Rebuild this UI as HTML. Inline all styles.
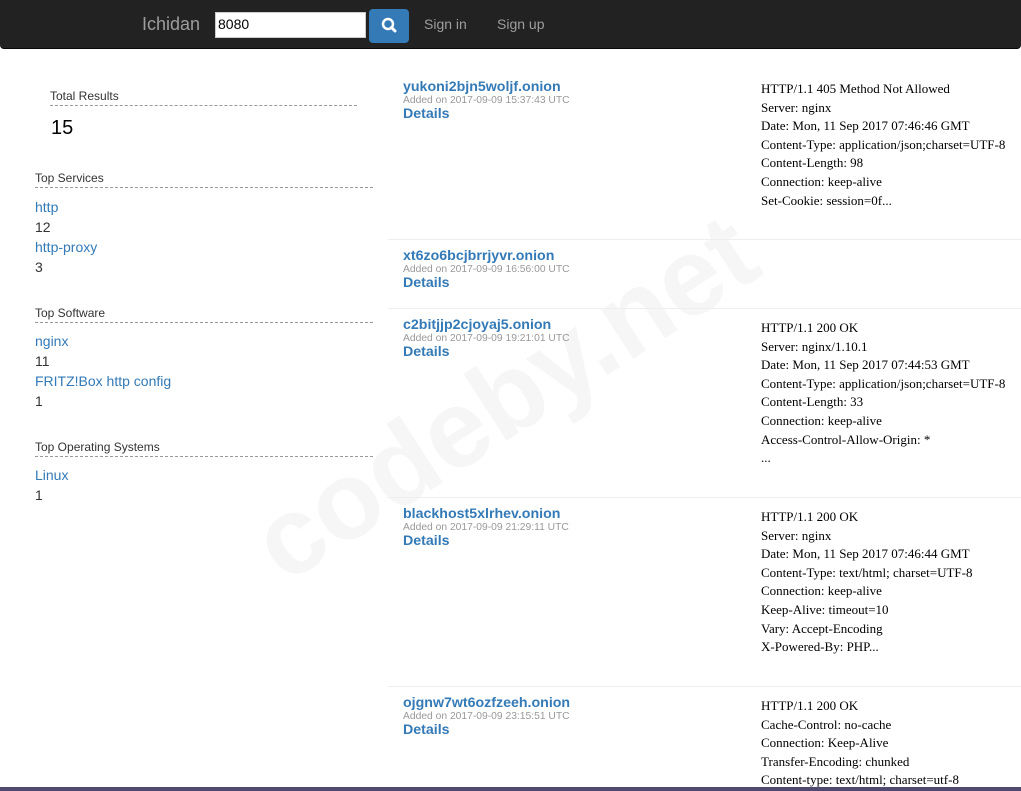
<!DOCTYPE html>
<html><head><meta charset="utf-8"><style>
*{margin:0;padding:0;box-sizing:border-box}
body{width:1021px;height:791px;overflow:hidden;background:#fff;font-family:"Liberation Sans",sans-serif;position:relative}
.nav{position:absolute;left:0;top:0;width:1021px;height:49px;background:#222;border-bottom:1px solid #080808;border-radius:0 0 4px 4px}
.brand{position:absolute;left:142px;top:14px;font-size:18px;color:#9d9d9d}
.inp{position:absolute;left:215px;top:12px;width:151px;height:26px;background:#fff;border:1px solid #ccc;font-size:14px;padding:3px 2px;color:#000}
.btn{position:absolute;left:369px;top:9px;width:40px;height:34px;background:#337ab7;border-radius:4px}
.nl{position:absolute;top:16px;font-size:14px;color:#9d9d9d}
.lbl{position:absolute;font-size:12px;color:#333;border-bottom:1px dashed #999;padding-bottom:2px}
.a{color:#337ab7}
.t{position:absolute;font-size:14px;color:#333;line-height:20px}
.host{position:absolute;left:403px;font-weight:bold;font-size:14.2px;color:#337ab7;line-height:16px}
.host small{display:block;font-weight:normal;font-size:10.3px;color:#999;line-height:11px}
.hdr{position:absolute;left:761px;font-family:"Liberation Serif",serif;font-size:13px;line-height:18.6px;color:#000;white-space:nowrap}
.sep{position:absolute;left:388px;width:633px;height:1px;background:#eee}
.wm{position:absolute;left:230px;top:500px;font-size:110px;font-weight:bold;color:#f6f6f6;transform:rotate(-33deg);transform-origin:left top;white-space:nowrap}
.tb{position:absolute;left:0;top:787px;width:1021px;height:4px;background:#504a70}
</style></head><body>
<div class="wm">codeby.net</div>
<div class="nav">
<div class="brand">Ichidan</div>
<div class="inp">8080</div>
<div class="btn"><svg width="40" height="34" viewBox="0 0 40 34"><circle cx="19" cy="15" r="5" fill="none" stroke="#fff" stroke-width="2.5"/><line x1="22.5" y1="18.5" x2="26" y2="22" stroke="#fff" stroke-width="3" stroke-linecap="round"/></svg></div>
<div class="nl" style="left:424px">Sign in</div>
<div class="nl" style="left:497px">Sign up</div>
</div>

<div class="lbl" style="left:50px;top:89px;width:307px">Total Results</div>
<div class="t" style="left:51px;top:116px;font-size:20px;color:#000;line-height:24px">15</div>
<div class="lbl" style="left:35px;top:171px;width:338px">Top Services</div>
<div class="t" style="left:35px;top:197px"><span class="a">http</span><br>12<br><span class="a">http-proxy</span><br>3</div>
<div class="lbl" style="left:35px;top:306px;width:338px">Top Software</div>
<div class="t" style="left:35px;top:331px"><span class="a">nginx</span><br>11<br><span class="a">FRITZ!Box http config</span><br>1</div>
<div class="lbl" style="left:35px;top:440px;width:338px">Top Operating Systems</div>
<div class="t" style="left:35px;top:465px"><span class="a">Linux</span><br>1</div>

<div class="host" style="top:79px">yukoni2bjn5woljf.onion<small>Added on 2017-09-09 15:37:43 UTC</small>Details</div>
<div class="hdr" style="top:80px">HTTP/1.1 405 Method Not Allowed<br>Server: nginx<br>Date: Mon, 11 Sep 2017 07:46:46 GMT<br>Content-Type: application/json;charset=UTF-8<br>Content-Length: 98<br>Connection: keep-alive<br>Set-Cookie: session=0f...</div>
<div class="sep" style="top:239px"></div>
<div class="host" style="top:248px">xt6zo6bcjbrrjyvr.onion<small>Added on 2017-09-09 16:56:00 UTC</small>Details</div>
<div class="sep" style="top:308px"></div>
<div class="host" style="top:317px">c2bitjjp2cjoyaj5.onion<small>Added on 2017-09-09 19:21:01 UTC</small>Details</div>
<div class="hdr" style="top:319px">HTTP/1.1 200 OK<br>Server: nginx/1.10.1<br>Date: Mon, 11 Sep 2017 07:44:53 GMT<br>Content-Type: application/json;charset=UTF-8<br>Content-Length: 33<br>Connection: keep-alive<br>Access-Control-Allow-Origin: *<br>...</div>
<div class="sep" style="top:497px"></div>
<div class="host" style="top:506px">blackhost5xlrhev.onion<small>Added on 2017-09-09 21:29:11 UTC</small>Details</div>
<div class="hdr" style="top:508px">HTTP/1.1 200 OK<br>Server: nginx<br>Date: Mon, 11 Sep 2017 07:46:44 GMT<br>Content-Type: text/html; charset=UTF-8<br>Connection: keep-alive<br>Keep-Alive: timeout=10<br>Vary: Accept-Encoding<br>X-Powered-By: PHP...</div>
<div class="sep" style="top:686px"></div>
<div class="host" style="top:695px">ojgnw7wt6ozfzeeh.onion<small>Added on 2017-09-09 23:15:51 UTC</small>Details</div>
<div class="hdr" style="top:697px">HTTP/1.1 200 OK<br>Cache-Control: no-cache<br>Connection: Keep-Alive<br>Transfer-Encoding: chunked<br>Content-type: text/html; charset=utf-8</div>
<div class="tb"></div>
</body></html>
